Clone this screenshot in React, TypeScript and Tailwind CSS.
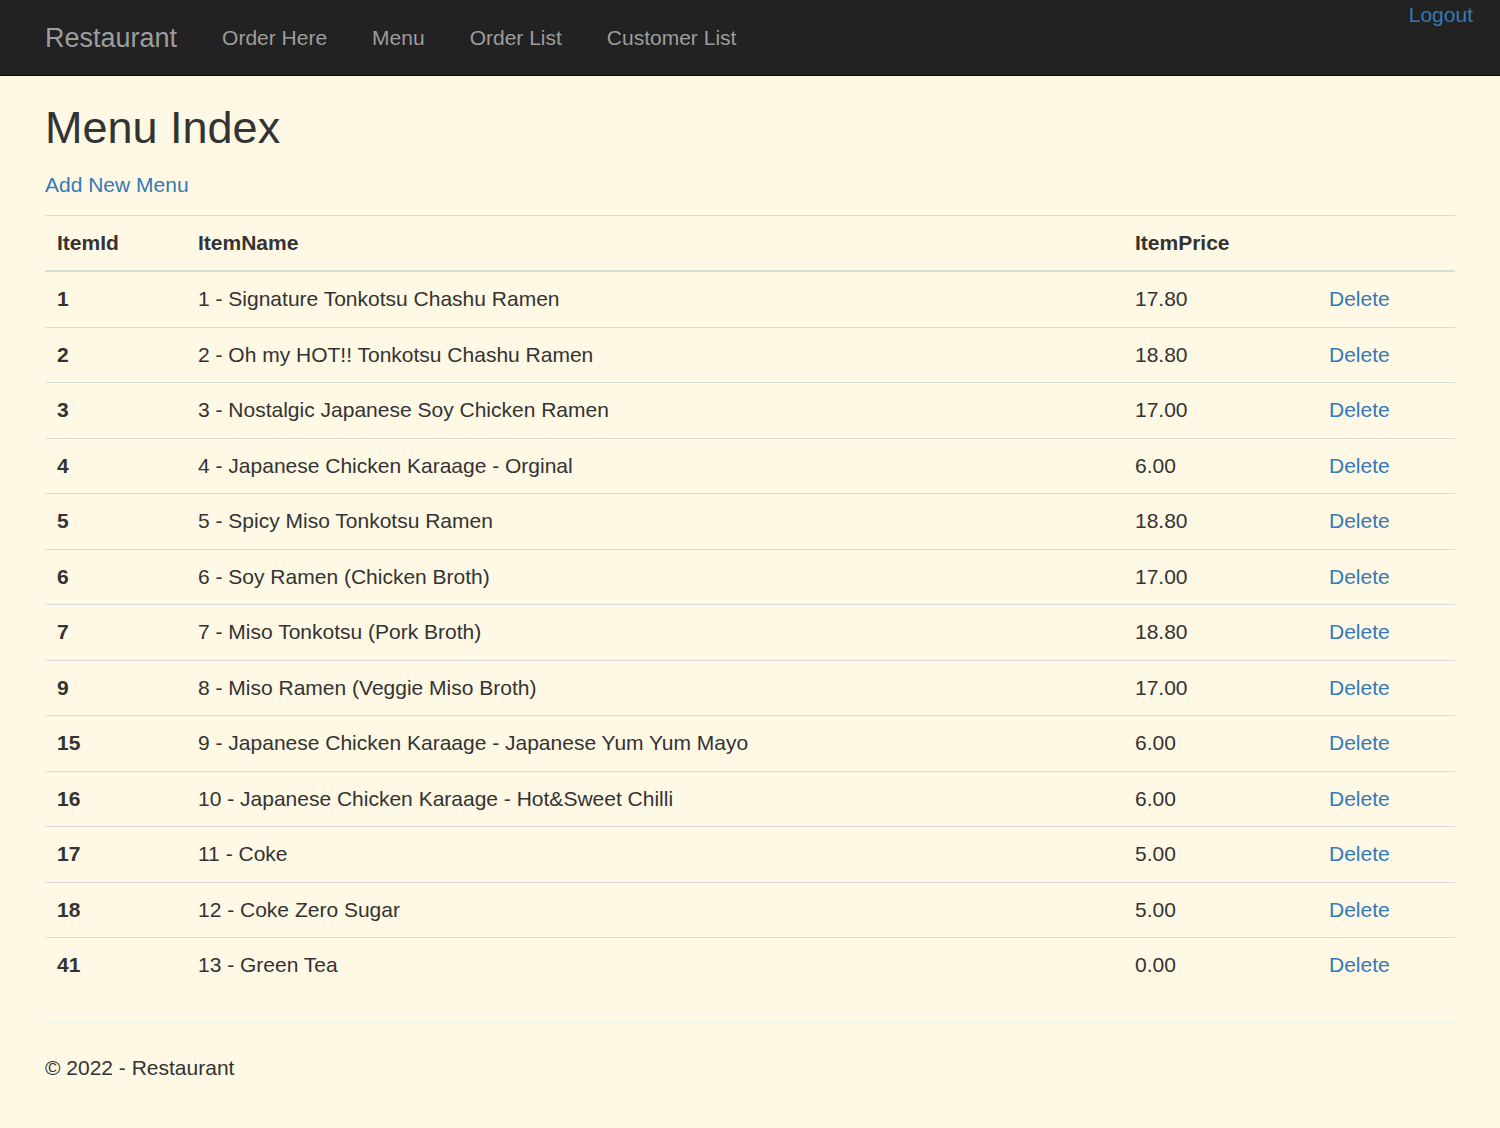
const menu = [
  { id: 1, name: '1 - Signature Tonkotsu Chashu Ramen', price: '17.80' },
  { id: 2, name: '2 - Oh my HOT!! Tonkotsu Chashu Ramen', price: '18.80' },
  { id: 3, name: '3 - Nostalgic Japanese Soy Chicken Ramen', price: '17.00' },
  { id: 4, name: '4 - Japanese Chicken Karaage - Orginal', price: '6.00' },
  { id: 5, name: '5 - Spicy Miso Tonkotsu Ramen', price: '18.80' },
  { id: 6, name: '6 - Soy Ramen (Chicken Broth)', price: '17.00' },
  { id: 7, name: '7 - Miso Tonkotsu (Pork Broth)', price: '18.80' },
  { id: 9, name: '8 - Miso Ramen (Veggie Miso Broth)', price: '17.00' },
  { id: 15, name: '9 - Japanese Chicken Karaage - Japanese Yum Yum Mayo', price: '6.00' },
  { id: 16, name: '10 - Japanese Chicken Karaage - Hot&Sweet Chilli', price: '6.00' },
  { id: 17, name: '11 - Coke', price: '5.00' },
  { id: 18, name: '12 - Coke Zero Sugar', price: '5.00' },
  { id: 41, name: '13 - Green Tea', price: '0.00' },
];

const navLinks = ['Order Here', 'Menu', 'Order List', 'Customer List'];

const App = () => {
  return (
    <div className="min-h-screen bg-[#fef8e4] font-['Liberation_Sans',Arial,sans-serif] text-[21px] leading-[30px] text-[#333]">
      {/* navbar */}
      <nav className="relative h-[76px] bg-[#222] border-b border-[#080808]">
        <div className="flex h-[75px] items-center px-[22.5px]">
          <a className="px-[22.5px] text-[27px] leading-[30px] text-[#9d9d9d]" href="#">
            Restaurant
          </a>
          {navLinks.map(link => (
            <a key={link} className="px-[22.5px] text-[#9d9d9d]" href="#">
              {link}
            </a>
          ))}
        </div>
        <a className="absolute right-[27px] top-0 text-[#337ab7]" href="#">
          Logout
        </a>
      </nav>

      <div className="px-[45px]">
        <h1 className="mt-[27px] mb-[17.5px] text-[45px] leading-[49.5px] font-normal">Menu Index</h1>
        <p className="mb-[15px]">
          <a className="text-[#337ab7]" href="#">Add New Menu</a>
        </p>

        <table className="w-full border-collapse">
          <tbody>
            <tr className="border-t border-[#d9dadb]">
              <th className="w-[141px] px-[12px] py-[12px] text-left font-bold border-b-2 border-[#d9dadb]">ItemId</th>
              <th className="w-[937px] px-[12px] py-[12px] text-left font-bold border-b-2 border-[#d9dadb]">ItemName</th>
              <th className="w-[194px] px-[12px] py-[12px] text-left font-bold border-b-2 border-[#d9dadb]">ItemPrice</th>
              <th className="px-[12px] border-b-2 border-[#d9dadb]"></th>
            </tr>
            {menu.map((item, i) => (
              <tr key={item.id} className={i === 0 ? '' : 'border-t border-[#d9dadb]'}>
                <td className="px-[12px] pt-[12px] pb-[12.5px] font-bold">{item.id}</td>
                <td className="px-[12px] pt-[12px] pb-[12.5px]">{item.name}</td>
                <td className="px-[12px] pt-[12px] pb-[12.5px]">{item.price}</td>
                <td className="px-[12px] pt-[12px] pb-[12.5px]">
                  <a className="text-[#337ab7]" href="#">Delete</a>
                </td>
              </tr>
            ))}
          </tbody>
        </table>

        <hr className="mt-[29px] border-0 border-t border-[#eeeeee]" />
        <footer className="pt-[30px] pb-[30px]">
          <p>© 2022 - Restaurant</p>
        </footer>
      </div>
    </div>
  );
};

export default App;
